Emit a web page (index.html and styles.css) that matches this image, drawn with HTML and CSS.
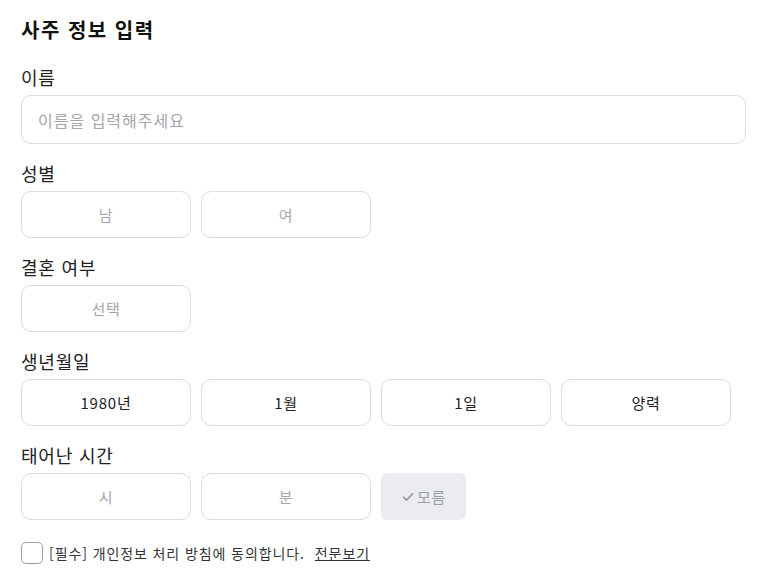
FILE: index.html
```html
<!DOCTYPE html>
<html lang="ko">
<head>
    <meta charset="UTF-8">
    <title>사주 정보 입력</title>
    <link rel="stylesheet" href="styles.css">
</head>
<body>

<div class="form">
    <h1 class="title">사주 정보 입력</h1>

    <div class="field first">
        <div class="label">이름</div>
        <input class="text-input" type="text" placeholder="이름을 입력해주세요">
    </div>

    <div class="field">
        <div class="label">성별</div>
        <div class="row">
            <button class="opt placeholder">남</button>
            <button class="opt placeholder">여</button>
        </div>
    </div>

    <div class="field">
        <div class="label">결혼 여부</div>
        <div class="row">
            <button class="opt placeholder">선택</button>
        </div>
    </div>

    <div class="field">
        <div class="label">생년월일</div>
        <div class="row">
            <button class="opt">1980년</button>
            <button class="opt">1월</button>
            <button class="opt">1일</button>
            <button class="opt">양력</button>
        </div>
    </div>

    <div class="field">
        <div class="label">태어난 시간</div>
        <div class="row">
            <button class="opt placeholder">시</button>
            <button class="opt placeholder">분</button>
            <button class="unknown">
                <svg width="14" height="14" viewBox="0 0 14 14">
                    <path d="M2.5 7.2 L5.6 10.2 L11.5 3.8" fill="none" stroke="#9ca0aa" stroke-width="1.8" stroke-linecap="round" stroke-linejoin="round"/>
                </svg>
                모름
            </button>
        </div>
    </div>

    <label class="agree">
        <span class="checkbox"></span>
        <span class="agree-text">[필수] 개인정보 처리 방침에 동의합니다.</span>
        <a class="more" href="#">전문보기</a>
    </label>
</div>

</body>
</html>
```

FILE: styles.css
```css
body {
    margin: 0;
    padding: 0;
    background-color: #ffffff;
    font-family: "Noto Sans CJK KR", "Noto Sans", sans-serif;
    color: #222222;
}

.form {
    padding: 17px 19px 20px 21px;
}

.title {
    margin: 0;
    font-size: 20px;
    line-height: 26px;
    font-weight: 700;
    letter-spacing: 1.5px;
    color: #111111;
}

.field {
    margin-top: 16px;
}

.field.first {
    margin-top: 21px;
}

.label {
    font-size: 18px;
    line-height: 26px;
    letter-spacing: 0.8px;
    margin-bottom: 5px;
    color: #222222;
}

.text-input {
    display: block;
    box-sizing: border-box;
    width: 100%;
    height: 49px;
    padding: 0 16px;
    border: 1px solid #dcdcdc;
    border-radius: 10px;
    font-family: inherit;
    font-size: 16px;
    letter-spacing: 1px;
    color: #222222;
    outline: none;
}

.text-input::placeholder {
    color: #a3a6ae;
}

.row {
    display: flex;
    gap: 10px;
}

.opt {
    box-sizing: border-box;
    width: 170px;
    height: 47px;
    border: 1px solid #dcdcdc;
    border-radius: 10px;
    background-color: #ffffff;
    font-family: inherit;
    font-size: 15px;
    letter-spacing: 0.8px;
    color: #222222;
    cursor: pointer;
}

.opt.placeholder {
    color: #a3a6ae;
}

.unknown {
    display: flex;
    align-items: center;
    justify-content: center;
    gap: 2px;
    box-sizing: border-box;
    width: 85px;
    height: 47px;
    border: none;
    border-radius: 6px;
    background-color: #ebecef;
    font-family: inherit;
    font-size: 15px;
    letter-spacing: 0.8px;
    color: #9ca0aa;
    cursor: pointer;
}

.agree {
    display: flex;
    align-items: center;
    margin-top: 22px;
    font-size: 14px;
    letter-spacing: 0.9px;
    color: #333333;
}

.checkbox {
    box-sizing: border-box;
    width: 22px;
    height: 22px;
    border: 1px solid #9a9ea6;
    border-radius: 5px;
    margin-right: 6px;
}

.more {
    margin-left: 10px;
    color: #333333;
    text-decoration: underline;
}
```
